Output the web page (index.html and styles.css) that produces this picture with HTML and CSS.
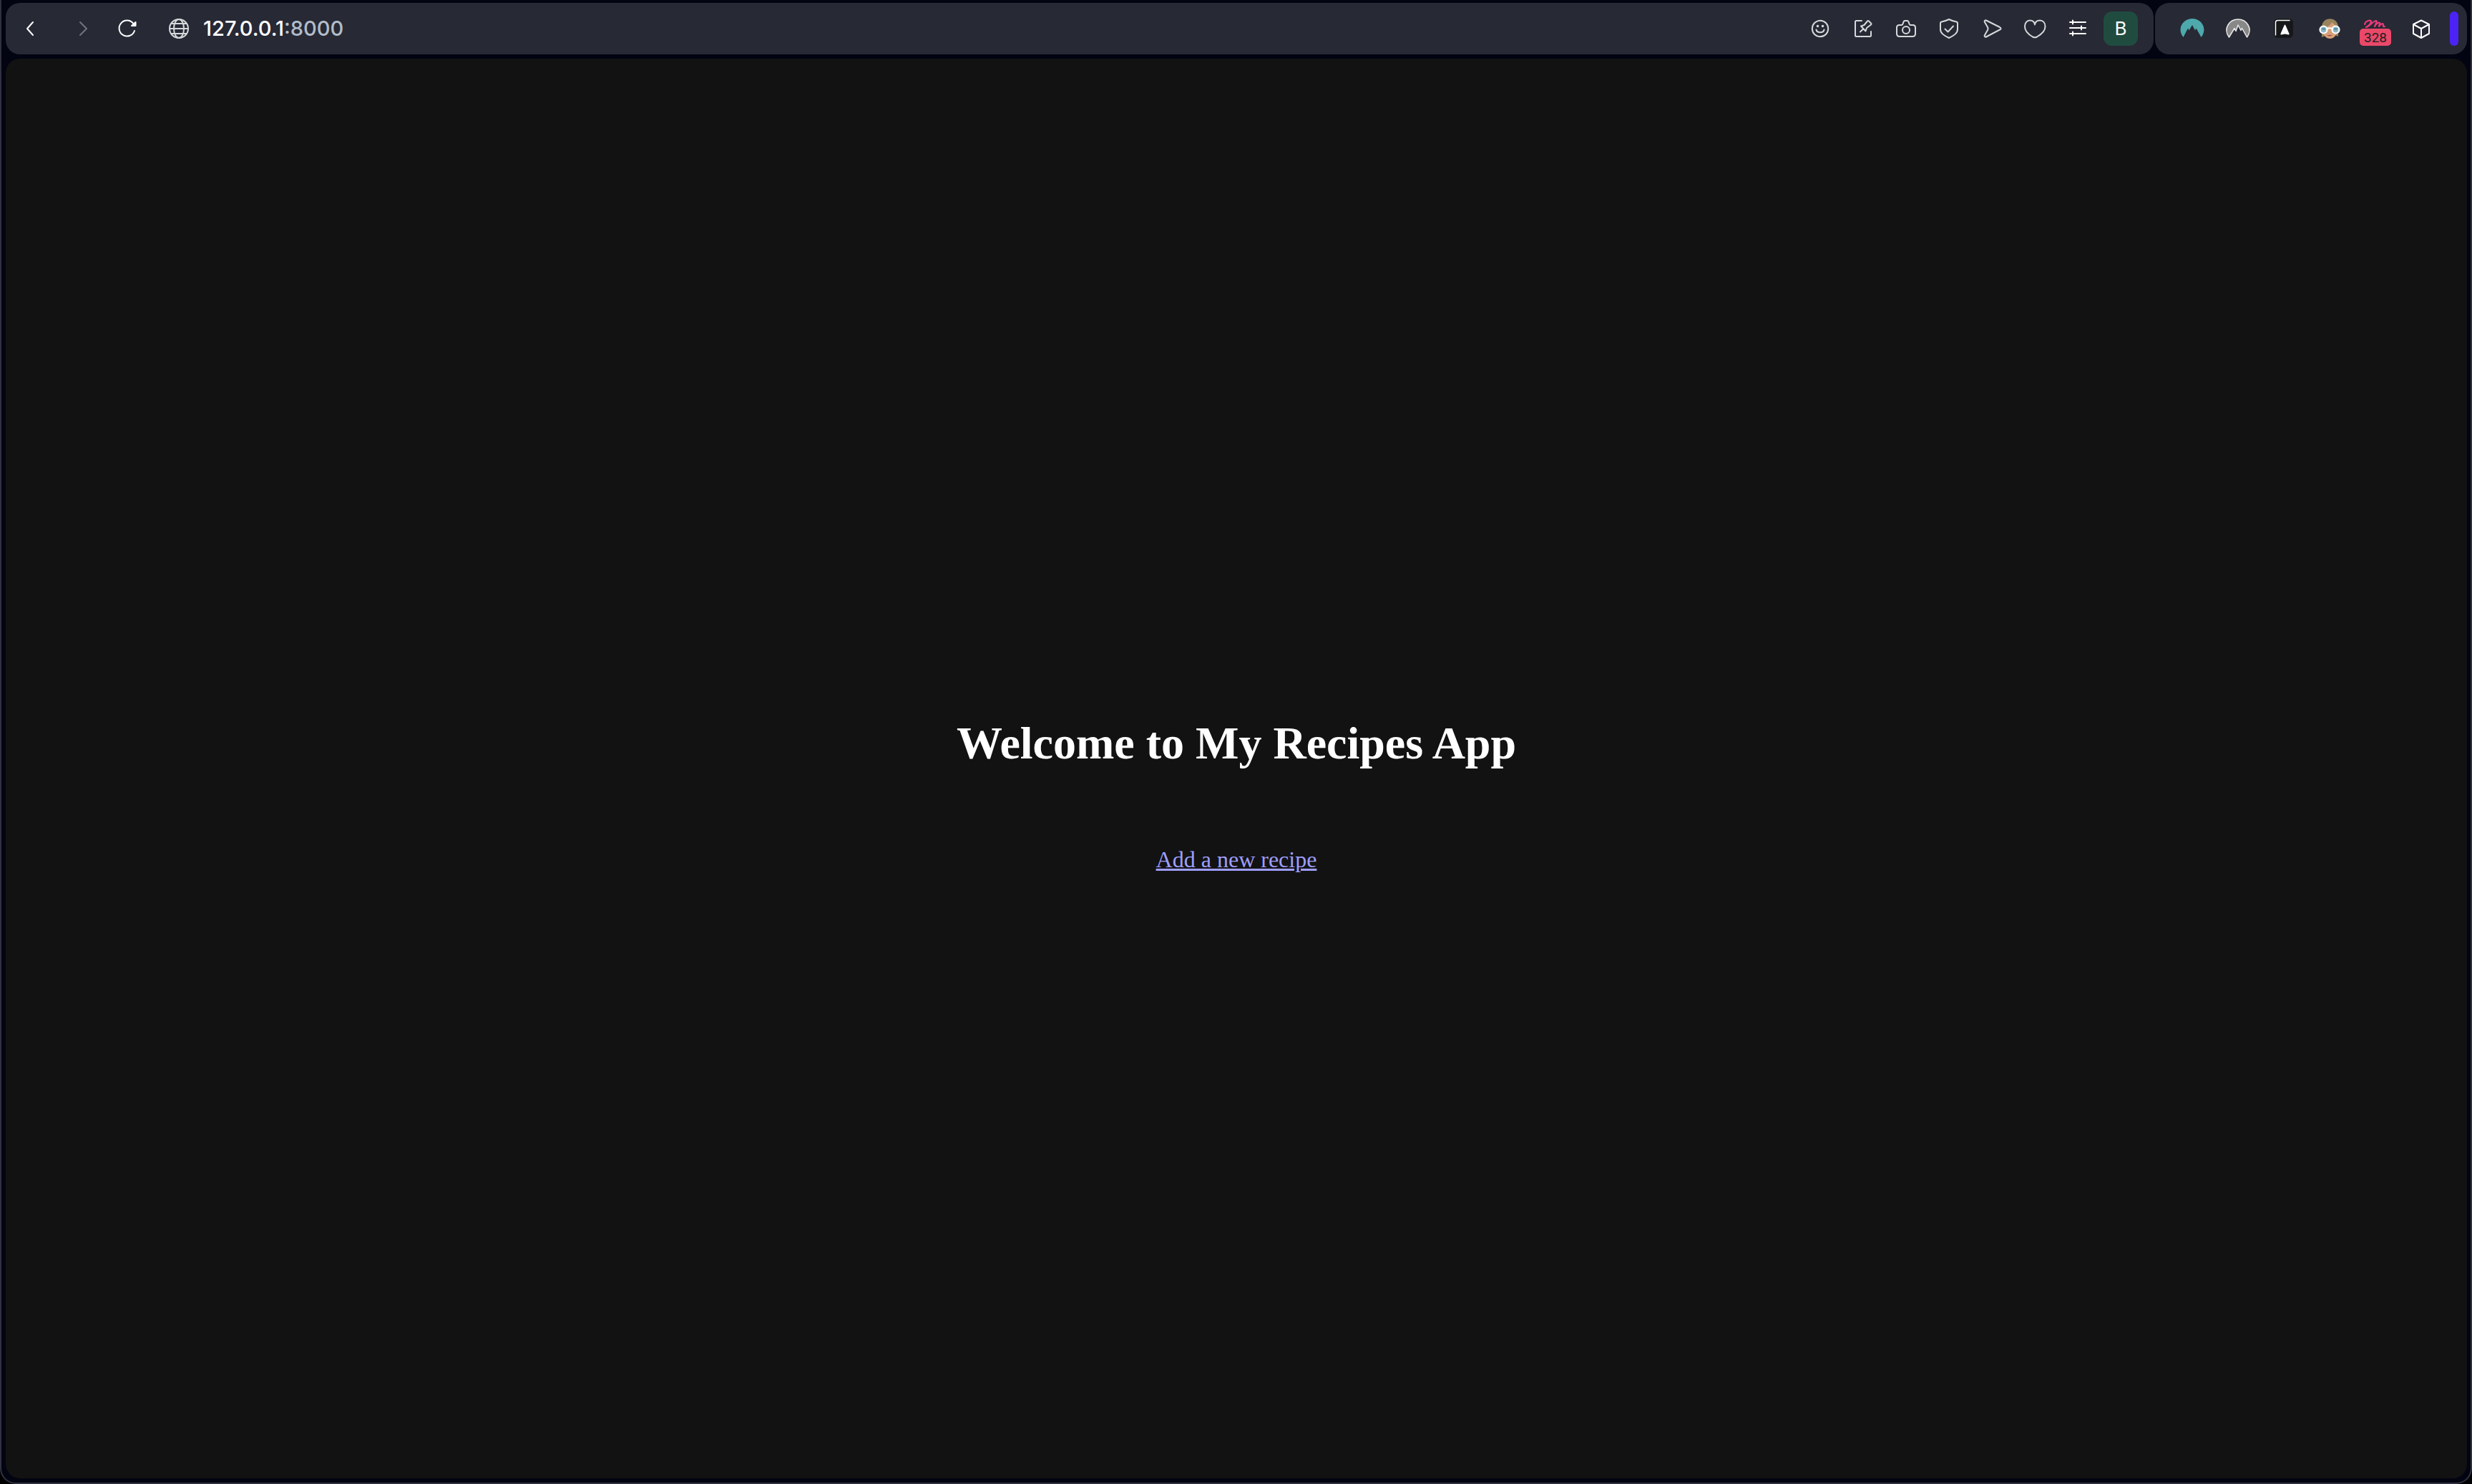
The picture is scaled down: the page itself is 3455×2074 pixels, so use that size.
FILE: index.html
```html
<!DOCTYPE html>
<html lang="en">
<head>
<meta charset="utf-8">
<title>My Recipes App</title>
<link rel="stylesheet" href="styles.css">
</head>
<body>
<div class="window">
  <header class="chrome">
    <div class="bar bar-main">
      <nav class="history" aria-label="History">
        <button class="icon back" aria-label="Back"><svg viewBox="0 0 48 48"><path d="M28 15 20 24l8 9"/></svg></button>
        <button class="icon forward" aria-label="Forward" disabled><svg viewBox="0 0 48 48"><path d="M20 15l9 9-9 9"/></svg></button>
        <button class="icon reload" aria-label="Reload"><svg viewBox="0 0 48 48"><path d="M34 27a11 11 0 1 1-2-10.500l3 3"/><path d="M35.500 15v5h-5.500z" fill="#fff"/></svg></button>
      </nav>
      <form class="address">
        <button class="icon soft" type="button" aria-label="Site information"><svg viewBox="0 0 48 48"><circle cx="24" cy="24" r="13"/><ellipse cx="24" cy="24" rx="7" ry="13"/><path d="M11 24h26M13.500 17h21M13.500 31h21"/></svg></button>
        <a class="url" href="http://127.0.0.1:8000">127.0.0.1<span class="port">:8000</span></a>
      </form>
      <div class="actions">
        <button class="icon soft" aria-label="Emoji"><svg viewBox="0 0 48 48"><circle cx="24" cy="24" r="11.200"/><path d="M18.500 25.500c1 5 10 5 11 0"/><path d="M20.500 20.500h.01M27.500 20.500h.01" stroke-width="3.600"/></svg></button>
        <button class="icon soft" aria-label="Pinboard"><svg viewBox="0 0 48 48"><path d="M22 13h-7.500q-1.500 0-1.500 1.500v19q0 1.500 1.500 1.500h19q1.500 0 1.500-1.500V28"/><path d="M20 28.500l4-4M21 20.500l6.500 7 1.500-4.500 6-4.500q1-1 0-2l-3-3q-1-1-2 0l-4.500 5.500z"/></svg></button>
        <button class="icon soft" aria-label="Snapshot"><svg viewBox="0 0 48 48"><path d="M14.500 19h3q1.500 0 2-1.500l1-3q.5-1.500 2-1.500h3q1.500 0 2 1.500l1 3q.5 1.500 2 1.500h3q3.500 0 3.500 3.500V31q0 4-4 4H15q-4 0-4-4v-8.500q0-3.500 3.500-3.500z"/><circle cx="24" cy="26" r="5"/></svg></button>
        <button class="icon soft" aria-label="Protection"><svg viewBox="0 0 48 48"><path d="M24 11q5 2.500 10.500 3.500 1.500.5 1.500 2V25c0 5-4 8-12 12-8-4-12-7-12-12v-8.500q0-1.500 1.500-2Q19 13.500 24 11z"/><path d="M18.500 24.500l4 4 7.500-8"/></svg></button>
        <button class="icon soft" aria-label="Send"><svg viewBox="0 0 48 48"><path d="M16 12.500l19 9.500q3 2 0 3.500l-19 10c-1.500.5-3-1-2-2.500l4-7q1-2 0-4l-4-7c-1-1.500.5-3 2-2.500z"/></svg></button>
        <button class="icon soft" aria-label="Bookmark"><svg viewBox="0 0 48 48"><path d="M24 18.500c.5-4 3-6 7-6 4.500 0 7.500 3.500 7.500 8.500 0 6-4.500 10.500-11.500 14.500q-3 1.500-6 0C14 31.500 10 27 10 21c0-5 3-8.500 7-8.500s6.500 2 7 6z"/></svg></button>
        <button class="icon" aria-label="Easy setup"><svg viewBox="0 0 48 48"><path d="M13 15h22M13 23h22M13 31h22M17 12.500v5M29 20.500v5M17 28.500v5"/></svg></button>
        <button class="icon profile" aria-label="Profile B">B</button>
      </div>
    </div>
    <div class="bar bar-extensions">
      <button class="icon" aria-label="VPN"><svg viewBox="0 0 48 48"><path d="M11.500 36C2 24 11 10 24 10s22 14 12.500 26L29.500 23.500l-1.500 3L24 19l-4.500 7.500-1.500-3z" fill="#4da9ac" stroke="none"/></svg></button>
      <button class="icon" aria-label="VPN off"><svg viewBox="0 0 48 48"><path d="M11.500 36C2.500 24 12 11 24 11s21.500 13 12.500 25L29.500 23.500l-1.500 3L24 19l-3 8.500-2-4z" fill="#888" stroke="#e9e9e9" stroke-width="1.500"/></svg></button>
      <button class="icon" aria-label="Apps"><svg viewBox="0 0 48 48"><rect x="10" y="10" width="27" height="27" rx="6" fill="#161718" stroke="none"/><path d="M12.500 33V15.500q0-3 3-3H32" stroke-width="1.500"/><path d="M24.500 19.500q1-2 2 0l5 11.500q.5 1.500-1 1.500l-5-1-5 1q-1.500 0-1-1.500z" fill="#fff" stroke="none"/></svg></button>
      <button class="icon" aria-label="Avatar"><svg viewBox="0 0 48 48"><g stroke="none"><path d="M13 36V23C12 6 37 6 36 23v12l-5-2-13 1z" fill="#98835d"/><path d="M15 23c4 0 11-4 12-8l7 6v8c-2 12-17 12-19 0z" fill="#d8a078"/><path d="M20 33.500q4 2 8 0-4-1.500-8 0z" fill="#9c5145"/></g><g fill="#8dbac5" stroke="#fff" stroke-width="2.200"><circle cx="15.500" cy="25.500" r="5"/><circle cx="32.500" cy="25.500" r="5"/><path d="M20 24q4-1.500 8 0" fill="none"/></g><path d="M14 24.500h3M31 24.500h3" stroke="#4c8597"/></svg></button>
      <button class="icon counter" aria-label="328 notifications"><svg viewBox="0 0 48 48"><path d="M9 18c1-5 9-7 9-4q-1 5-7 8c6-2 10-9 14-9 2 0-1 5-2 8 2-4 5-6 7-5 1 0-1 3-1 5 2-3 5-5 6-3 0 2-1 4 2 3" stroke="#e73b78" stroke-width="2.200"/></svg><span class="badge">328</span></button>
      <button class="icon" aria-label="Extensions"><svg viewBox="0 0 48 48"><path d="M24 12.500l11 5.500v13l-11 6-11-6V18zM13 18l11 6 11-6M24 24v13"/></svg></button>
      <span class="handle"></span>
    </div>
  </header>
  <main class="page">
    <h1 class="title">Welcome to My Recipes App</h1>
    <a class="link" href="#new">Add a new recipe</a>
  </main>
</div>
</body>
</html>
```
FILE: styles.css
```css
* { box-sizing: border-box; }
body { margin: 0; background: #000; }

.window {
  display: flex;
  flex-direction: column;
  gap: 6px;
  min-height: 100vh;
  padding: 4px 5px 6px 6px;
  background: #020412;
  border: 2px solid #30313f;
  border-top: 0;
  border-radius: 0 0 22px 22px;
}

.chrome { display: flex; gap: 2px; }
.bar {
  display: flex;
  align-items: center;
  height: 72px;
  background: #272935;
  border-radius: 20px;
}
.bar-main { flex: 1; padding: 0 22px 0 10px; }
.bar-extensions { gap: 16px; padding: 0 12px 0 28px; }

.icon {
  position: relative;
  flex: none;
  width: 48px;
  height: 48px;
  padding: 0;
  border: 0;
  background: none;
  color: #fff;
}
.icon svg {
  display: block;
  width: 48px;
  height: 48px;
  fill: none;
  stroke: currentColor;
  stroke-width: 2;
  stroke-linecap: round;
  stroke-linejoin: round;
}
.soft { color: #d5d9da; }

.history { display: flex; }
.back { margin-right: 26px; }
.forward { margin-right: 14px; color: #73747e; }
.reload { margin-right: 24px; }

.address { display: flex; flex: 1; align-items: center; gap: 10px; }
.url {
  color: #fff;
  font: 500 29px/36px Inter, sans-serif;
  text-decoration: none;
}
.port { color: #b2bdc9; }

.actions { display: flex; gap: 12px; }
.icon.profile {
  border-radius: 12px;
  background: #204c40;
  font: 400 26px/48px Inter, sans-serif;
}

.badge {
  position: absolute;
  left: 2px;
  bottom: 0;
  width: 44px;
  height: 24px;
  border-radius: 5px;
  background: #ea4869;
  color: #202124;
  font: 400 19px/26px Roboto, sans-serif;
  text-align: center;
}
.handle {
  width: 12px;
  height: 48px;
  border-radius: 6px;
  background: #4b24f5;
}

.page {
  display: flex;
  flex: 1;
  flex-direction: column;
  align-items: center;
  justify-content: center;
  gap: 107px;
  padding-top: 74px;
  background: #121212;
  border-radius: 20px;
  font-family: "Liberation Serif", serif;
}
.title {
  margin: 0;
  color: #fff;
  font-size: 64px;
  line-height: 74px;
}
.link {
  color: #9e9eff;
  font-size: 32px;
  line-height: 37px;
}
```
